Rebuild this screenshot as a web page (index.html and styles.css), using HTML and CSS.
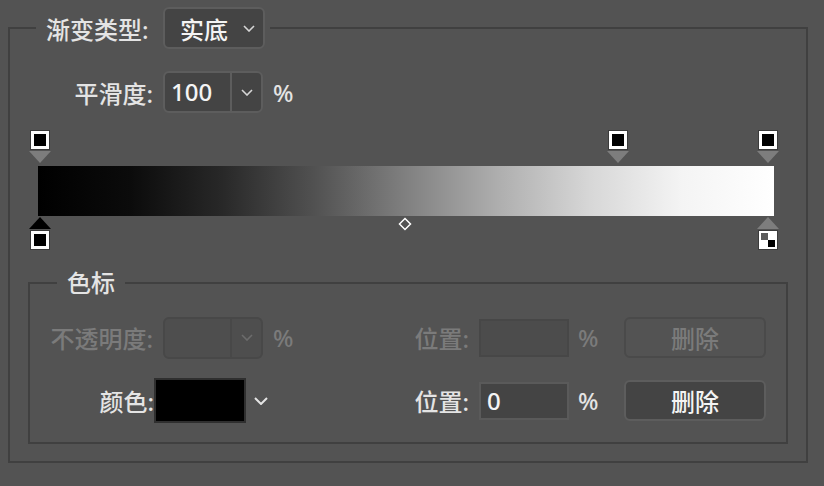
FILE: index.html
```html
<!DOCTYPE html>
<html lang="zh-CN">
<head>
    <meta charset="UTF-8">
    <title>渐变编辑器</title>
    <link rel="stylesheet" href="styles.css">
</head>
<body>
    <fieldset class="panel">
        <legend class="panel-legend">
            <span class="legend-label">渐变类型:</span>
            <div class="select">
                <span>实底</span>
                <svg class="chev" width="12" height="7" viewBox="0 0 12 7"><polyline points="1,1 6,6 11,1"/></svg>
            </div>
        </legend>

        <div class="row smooth-row">
            <span class="label label-wide">平滑度:</span>
            <div class="combo">
                <span class="combo-value">100</span>
                <span class="combo-btn">
                    <svg class="chev" width="12" height="7" viewBox="0 0 12 7"><polyline points="1,1 6,6 11,1"/></svg>
                </span>
            </div>
            <span class="pct">%</span>
        </div>

        <div class="ramp">
            <!-- opacity stops -->
            <svg class="stop stop-top" style="left:-9px" width="22" height="34" viewBox="0 0 22 34">
                <rect x="1" y="0" width="20" height="20" fill="#3b3b3b"/>
                <rect x="2" y="1" width="18" height="18" fill="#fff"/>
                <rect x="5" y="4" width="12" height="12" fill="#000"/>
                <polygon points="0,21 22,21 11,33" fill="#7d7d7d"/>
            </svg>
            <svg class="stop stop-top" style="left:569px" width="22" height="34" viewBox="0 0 22 34">
                <rect x="1" y="0" width="20" height="20" fill="#3b3b3b"/>
                <rect x="2" y="1" width="18" height="18" fill="#fff"/>
                <rect x="5" y="4" width="12" height="12" fill="#000"/>
                <polygon points="0,21 22,21 11,33" fill="#7d7d7d"/>
            </svg>
            <svg class="stop stop-top" style="left:719px" width="22" height="34" viewBox="0 0 22 34">
                <rect x="1" y="0" width="20" height="20" fill="#3b3b3b"/>
                <rect x="2" y="1" width="18" height="18" fill="#fff"/>
                <rect x="5" y="4" width="12" height="12" fill="#000"/>
                <polygon points="0,21 22,21 11,33" fill="#7d7d7d"/>
            </svg>

            <div class="bar"></div>

            <!-- color stops -->
            <svg class="stop stop-bottom" style="left:-9px" width="22" height="34" viewBox="0 0 22 34">
                <polygon points="11,0 0,12 22,12" fill="#000"/>
                <rect x="1" y="13" width="20" height="20" fill="#3b3b3b"/>
                <rect x="2" y="14" width="18" height="18" fill="#fff"/>
                <rect x="5" y="17" width="12" height="12" fill="#000"/>
            </svg>
            <svg class="stop stop-bottom" style="left:719px" width="22" height="34" viewBox="0 0 22 34">
                <polygon points="11,0 0,12 22,12" fill="#7d7d7d"/>
                <rect x="1" y="13" width="20" height="20" fill="#3b3b3b"/>
                <rect x="2" y="14" width="18" height="18" fill="#fff"/>
                <rect x="4" y="16" width="7" height="7" fill="#5a5a5a"/>
                <rect x="11" y="23" width="7" height="7" fill="#000"/>
            </svg>

            <svg class="midpoint" width="14" height="14" viewBox="0 0 14 14">
                <polygon points="7,1.5 12.5,7 7,12.5 1.5,7" fill="none" stroke="#fff" stroke-width="1.5"/>
            </svg>
        </div>

        <fieldset class="stops">
            <legend class="stops-legend">色标</legend>

            <div class="row">
                <div class="left-group">
                    <span class="label label-wide disabled">不透明度:</span>
                    <div class="combo combo-disabled">
                        <span class="combo-value"></span>
                        <span class="combo-btn">
                            <svg class="chev" width="12" height="7" viewBox="0 0 12 7"><polyline points="1,1 6,6 11,1"/></svg>
                        </span>
                    </div>
                    <span class="pct disabled">%</span>
                </div>
                <span class="label label-pos disabled">位置:</span>
                <div class="field field-disabled"></div>
                <span class="pct-pos disabled">%</span>
                <button class="btn btn-disabled">删除</button>
            </div>

            <div class="row">
                <div class="left-group">
                    <span class="label label-color">颜色:</span>
                    <div class="swatch"></div>
                    <svg class="chev chev-big" width="14" height="8" viewBox="0 0 14 8"><polyline points="1,1 7,7 13,1"/></svg>
                </div>
                <span class="label label-pos">位置:</span>
                <div class="field">0</div>
                <span class="pct-pos">%</span>
                <button class="btn">删除</button>
            </div>
        </fieldset>
    </fieldset>
</body>
</html>
```

FILE: styles.css
```css
:root {
    --bg: #535353;
    --frame: #404040;
    --text: #e4e4e4;
    --text-bright: #f4f4f4;
    --text-off: #7b7b7b;
    --ctrl-bg: #444444;
    --ctrl-border: #5d5d5d;
}

* {
    box-sizing: border-box;
    margin: 0;
    padding: 0;
}

body {
    background: var(--bg);
    color: var(--text);
    font-family: "Noto Sans", "Noto Sans CJK SC", sans-serif;
    font-size: 24px;
    font-weight: 500;
}

.panel {
    width: 800px;
    margin: 7px 0 0 8px;
    padding: 0 18px;
    border: 2px solid var(--frame);
}

.panel-legend {
    display: flex;
    align-items: center;
    margin-left: 8px;
    padding: 0 5px 0 10px;
}

.legend-label {
    width: 117px;
}

.select {
    width: 102px;
    height: 42px;
    display: flex;
    align-items: center;
    justify-content: space-between;
    padding: 0 8px 0 15px;
    background: var(--ctrl-bg);
    border: 2px solid var(--ctrl-border);
    border-radius: 6px;
    color: var(--text-bright);
}

.chev {
    fill: none;
    stroke: #d6d6d6;
    stroke-width: 1.6;
}

.chev-big {
    stroke: #e4e4e4;
    stroke-width: 2;
    margin-left: 8px;
}

.row {
    display: flex;
    align-items: center;
    height: 45px;
}

.smooth-row {
    height: 42px;
    margin-top: 22px;
}

.label {
    text-align: right;
    white-space: nowrap;
}

.label-wide {
    width: 133px;
    padding-right: 10px;
}

.smooth-row .label-wide {
    width: 135px;
}

.label-color {
    width: 124px;
}

.label-pos {
    width: 99px;
    padding-right: 10px;
}

.disabled {
    color: var(--text-off);
}

.combo {
    width: 100px;
    height: 42px;
    display: flex;
    background: var(--ctrl-bg);
    border: 2px solid var(--ctrl-border);
    border-radius: 6px;
    color: var(--text-bright);
}

.combo-value {
    width: 67px;
    padding-left: 6px;
    line-height: 38px;
    border-right: 2px solid var(--ctrl-border);
}

.combo-btn {
    flex: 1;
    display: flex;
    align-items: center;
    justify-content: center;
}

.combo-disabled {
    background: #4e4e4e;
    border-color: #484848;
}

.combo-disabled .combo-value {
    border-right-color: #484848;
}

.combo-disabled .chev {
    stroke: #6c6c6c;
}

.pct {
    margin-left: 10px;
}

.ramp {
    position: relative;
    height: 123px;
    margin: 16px 14px 0 10px;
    padding-top: 37px;
}

.bar {
    height: 50px;
    background: linear-gradient(to right,
        #000 0%, #0b0b0b 12.5%, #282828 25%, #515151 37.5%,
        #808080 50%, #aeaeae 62.5%, #d7d7d7 75%, #f4f4f4 87.5%, #fff 100%);
}

.stop {
    position: absolute;
    display: block;
}

.stop-top {
    top: 1px;
}

.stop-bottom {
    top: 88px;
}

.midpoint {
    position: absolute;
    left: 360px;
    top: 88px;
}

.stops {
    margin: 16px 0 17px;
    padding: 17px 0 19px;
    border: 2px solid var(--frame);
}

.stops-legend {
    margin-left: 27px;
    padding: 0 10px;
    line-height: 30px;
}

.stops .row + .row {
    margin-top: 18px;
}

.left-group {
    width: 350px;
    display: flex;
    align-items: center;
}

.swatch {
    width: 92px;
    height: 45px;
    background: #000;
    border: 2px solid #2f2f2f;
}

.field {
    width: 90px;
    height: 38px;
    padding-left: 6px;
    line-height: 34px;
    background: var(--ctrl-bg);
    border: 2px solid #5a5a5a;
    color: var(--text-bright);
}

.field-disabled {
    background: #4c4c4c;
    border-color: #474747;
}

.pct-pos {
    width: 55px;
    padding-left: 9px;
}

.btn {
    width: 142px;
    height: 41px;
    font: inherit;
    color: var(--text-bright);
    background: var(--ctrl-bg);
    border: 2px solid var(--ctrl-border);
    border-radius: 6px;
}

.btn-disabled {
    color: var(--text-off);
    background: var(--bg);
    border-color: #4a4a4a;
}
```
